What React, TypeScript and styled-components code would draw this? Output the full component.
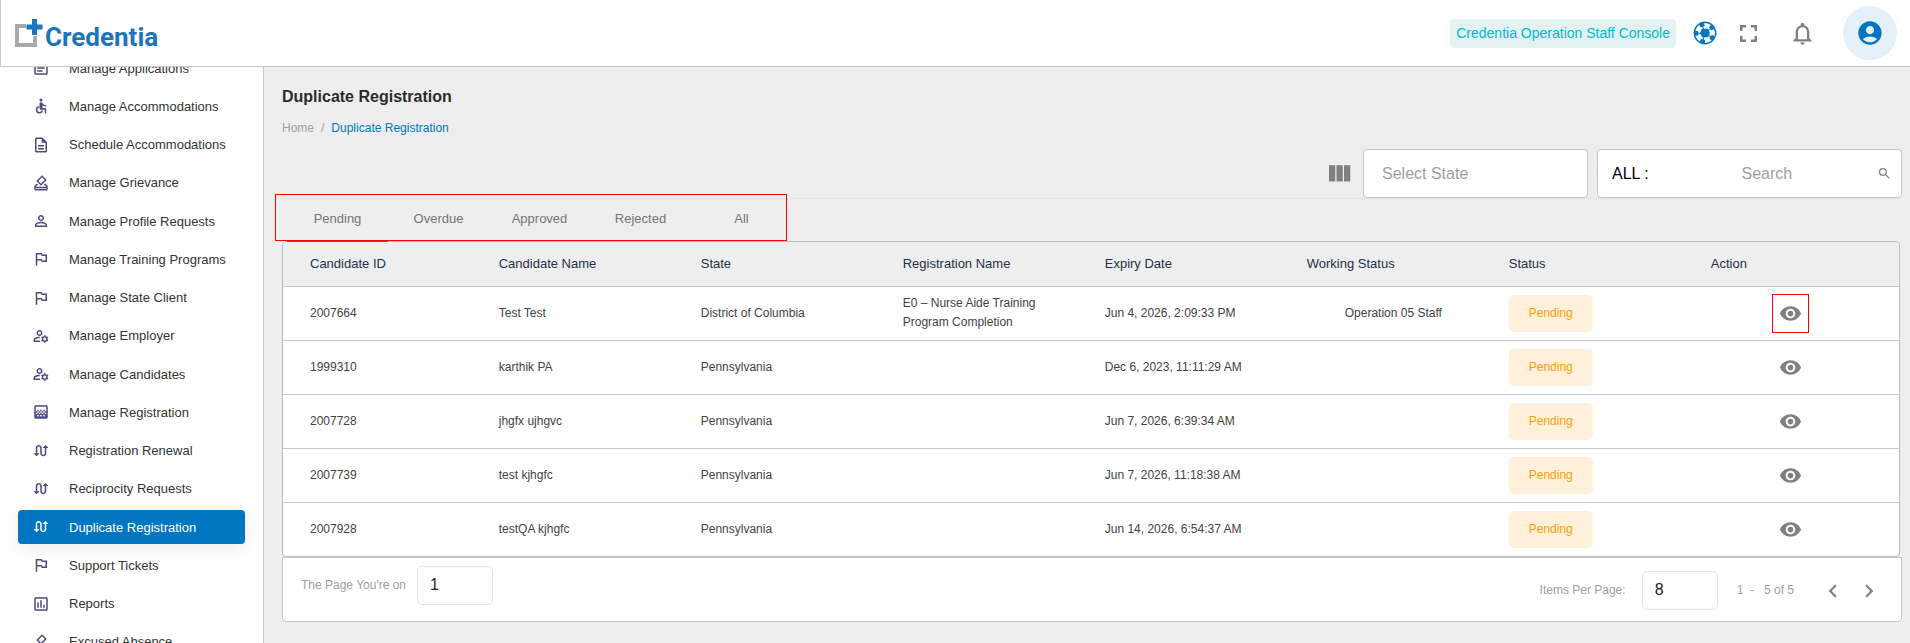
import React from 'react';
import styled, { createGlobalStyle, css } from 'styled-components';
import type { IconType } from 'react-icons';
import {
  MdAccessible,
  MdAccountCircle,
  MdChevronLeft,
  MdChevronRight,
  MdFullscreen,
  MdGradient,
  MdNotificationsNone,
  MdOutlineArticle,
  MdOutlineAssessment,
  MdOutlineDescription,
  MdOutlineHowToVote,
  MdOutlineManageAccounts,
  MdOutlinedFlag,
  MdPersonOutline,
  MdSearch,
  MdSwapCalls,
  MdVisibility,
} from 'react-icons/md';

const colors = {
  brand: '#0076c1',
  page: '#eeeeee',
  line: '#c8c8c8',
  softLine: '#e4e4e4',
  text: '#424242',
  muted: '#9e9e9e',
  icon: '#808080',
  navIcon: '#4b4b80',
  mark: '#ff0000',
};

const GlobalStyle = createGlobalStyle`
  *, *::before, *::after { box-sizing: border-box; }
  html, body, #root { height: 100%; }
  body {
    margin: 0;
    background: ${colors.page};
    color: ${colors.text};
    font-family: "Liberation Sans", Arial, sans-serif;
    font-size: 12px;
    overflow: hidden;
  }
  button, input { font: inherit; color: inherit; }
  button { border: 0; padding: 0; background: none; cursor: pointer; }
  a { color: inherit; text-decoration: none; }
`;

const Shell = styled.div`
  display: flex;
  flex-direction: column;
  height: 100vh;
`;

const TopBar = styled.header`
  display: flex;
  flex: none;
  align-items: center;
  justify-content: space-between;
  height: 67px;
  padding: 0 13px 0 14px;
  background: #fff;
  border-left: 1px solid ${colors.line};
  border-bottom: 1px solid ${colors.line};
`;

const Brand = styled.a`
  display: flex;
`;

const TopActions = styled.div`
  display: flex;
  align-items: center;
`;

const ConsoleTag = styled.span`
  padding: 0 6px;
  margin-right: 15px;
  border-radius: 4px;
  background: #e3f3f2;
  color: #00b8d4;
  font-size: 14px;
  line-height: 29px;
`;

const IconButton = styled.button<{ $width?: number; $color?: string }>`
  display: inline-flex;
  align-items: center;
  justify-content: center;
  width: ${({ $width }) => $width ?? 24}px;
  color: ${({ $color }) => $color ?? colors.icon};
`;

const Avatar = styled.button`
  display: flex;
  align-items: center;
  justify-content: center;
  width: 54px;
  height: 54px;
  margin-left: 16px;
  border-radius: 50%;
  background: #e3f0f9;
  color: ${colors.brand};
`;

const Body = styled.div`
  display: flex;
  flex: 1;
  min-height: 0;
`;

const Sidebar = styled.nav`
  flex: none;
  width: 264px;
  overflow: hidden;
  background: #fff;
  border-right: 1px solid ${colors.line};
`;

const NavList = styled.ul`
  display: flex;
  flex-direction: column;
  justify-content: space-between;
  min-height: 608px;
  margin: -16px 0 0;
  padding: 0 18px;
  list-style: none;
`;

const NavLink = styled.a<{ $active?: boolean }>`
  display: flex;
  align-items: center;
  gap: 19px;
  height: 34px;
  padding-left: 14px;
  border-radius: 4px;
  color: #333;
  font-size: 13px;
  white-space: nowrap;
  svg { color: ${colors.navIcon}; }
  ${({ $active }) =>
    $active &&
    css`
      background: ${colors.brand};
      color: #fff;
      box-shadow: 0 4px 16px rgba(0, 0, 0, 0.08);
      svg { color: #fff; }
    `}
`;

const Main = styled.main`
  flex: 1;
  min-width: 0;
  padding: 20px 8px 20px 18px;
`;

const Title = styled.h1`
  margin: 0;
  color: #2b2b2b;
  font-size: 16px;
  line-height: 20px;
`;

const Crumbs = styled.nav`
  display: flex;
  gap: 7px;
  margin-top: 12px;
  color: ${colors.muted};
  line-height: 18px;
`;

const CrumbCurrent = styled.a`
  color: ${colors.brand};
`;

const Filters = styled.div`
  display: flex;
  align-items: center;
  justify-content: flex-end;
  margin-top: 12px;
  border-bottom: 1px solid ${colors.softLine};
`;

const Field = styled.div<{ $width: number }>`
  display: flex;
  align-items: center;
  width: ${({ $width }) => $width}px;
  height: 49px;
  margin-left: 9px;
  background: #fff;
  border: 1px solid ${colors.line};
  border-radius: 4px;
  font-size: 16px;
`;

const BareInput = styled.input<{ $center?: boolean }>`
  flex: 1;
  min-width: 0;
  width: 100%;
  height: 100%;
  padding: 0 18px;
  border: 0;
  outline: 0;
  background: none;
  text-align: ${({ $center }) => ($center ? 'center' : 'left')};
  &::placeholder { color: ${colors.muted}; opacity: 1; }
`;

const Scope = styled.label`
  padding: 0 18px 0 14px;
  color: #000;
`;

const Tabs = styled.div`
  position: relative;
  display: flex;
  height: 42px;
  padding-left: 5px;
`;

const TabsMark = styled.span`
  position: absolute;
  top: -5px;
  bottom: 0;
  left: -7px;
  width: 512px;
  border: 1px solid ${colors.mark};
  pointer-events: none;
`;

const Tab = styled.button<{ $active?: boolean }>`
  position: relative;
  width: 101px;
  padding-bottom: 3px;
  color: #757575;
  font-size: 13px;
  ${({ $active }) =>
    $active &&
    css`
      &::after {
        content: '';
        position: absolute;
        right: 0;
        bottom: -1px;
        left: 0;
        height: 2px;
        background: ${colors.brand};
      }
    `}
`;

const Card = styled.section`
  margin-right: 2px;
  border: 1px solid #bdbdbd;
  border-radius: 4px;
  background: #fff;
`;

const Table = styled.table`
  width: 100%;
  table-layout: fixed;
  border-collapse: collapse;
  text-align: left;
`;

const HeadCell = styled.th`
  height: 44px;
  padding: 0;
  background: ${colors.page};
  color: #22324a;
  font-size: 13px;
  font-weight: 400;
  &:first-child { padding-left: 27px; border-top-left-radius: 4px; }
  &:last-child { border-top-right-radius: 4px; }
`;

const Row = styled.tr`
  border-top: 1px solid ${colors.line};
`;

const Cell = styled.td<{ $inset?: number }>`
  height: 54px;
  padding: 0 0 0 ${({ $inset }) => $inset ?? 0}px;
  line-height: 19px;
`;

const RegistrationName = styled.div`
  max-width: 160px;
`;

const Status = styled.span`
  display: inline-block;
  width: 84px;
  border-radius: 5px;
  background: #fff0db;
  color: #ffa000;
  line-height: 37px;
  text-align: center;
  vertical-align: middle;
`;

const ViewButton = styled.button<{ $marked?: boolean }>`
  display: flex;
  align-items: center;
  justify-content: center;
  width: 37px;
  height: 39px;
  color: ${colors.icon};
  border: 1px solid ${({ $marked }) => ($marked ? colors.mark : 'transparent')};
`;

const Pager = styled.footer`
  display: flex;
  justify-content: space-between;
  height: 65px;
  padding: 0 14px 0 18px;
  background: #fff;
  border: 1px solid ${colors.line};
  border-radius: 0 0 4px 4px;
  color: ${colors.muted};
`;

const PagerGroup = styled.div<{ $top: number; $gap: number }>`
  display: flex;
  align-items: flex-start;
  padding-top: ${({ $top }) => $top}px;
  line-height: 39px;
  > label { margin-right: ${({ $gap }) => $gap}px; }
  > button { height: 39px; }
`;

const PagerInput = styled.input`
  width: 76px;
  height: 39px;
  padding: 0 12px 2px;
  border: 1px solid ${colors.softLine};
  border-radius: 5px;
  background: #fff;
  color: #222;
  font-size: 16px;
`;

const Range = styled.span`
  margin: 0 21px 0 19px;
  white-space: pre;
`;

const Logo = () => (
  <svg width="160" height="40" viewBox="0 0 160 40" role="img" aria-label="Credentia">
    <path d="M11 13H2v19h18v-9" fill="none" stroke="#a7a9ac" strokeWidth="4" />
    <path d="M17 6h5v5.500h5.500v5H22V22h-5v-5.500h-5.500v-5H17z" fill="#1c75bc" />
    <text x="30" y="33" fill="#1c75bc" fontFamily="Roboto, sans-serif" fontSize="26" fontWeight="700">
      Credentia
    </text>
  </svg>
);

const ColumnsIcon = () => (
  <svg width="30" height="30" viewBox="0 0 24 24" fill="currentColor" aria-hidden="true">
    <path d="M10 18h5V5h-5v13zm-6 0h5V5H4v13zM16 5v13h5V5h-5z" />
  </svg>
);

const BallIcon = () => (
  <svg width="24" height="24" viewBox="0 0 24 24" fill="currentColor" aria-hidden="true">
    <circle cx="12" cy="12" r="10.7" fill="none" stroke="currentColor" strokeWidth="1.400" />
    <path d="M9 7.700h6l2 4.300-2.200 4.300H9.200L7 12z" />
    {[-20, 52, 124, 196, 268].map((angle) => (
      <g key={angle} transform={`rotate(${angle} 12 12)`}>
        <path d="M11.500 4h1v4h-1z" />
        <path d="M9.300 2.600 12 1.200l2.700 1.400-.6 2.700h-4.200z" />
      </g>
    ))}
  </svg>
);

const navItems: { label: string; icon: IconType; active?: boolean }[] = [
  { label: 'Manage Applications', icon: MdOutlineArticle },
  { label: 'Manage Accommodations', icon: MdAccessible },
  { label: 'Schedule Accommodations', icon: MdOutlineDescription },
  { label: 'Manage Grievance', icon: MdOutlineHowToVote },
  { label: 'Manage Profile Requests', icon: MdPersonOutline },
  { label: 'Manage Training Programs', icon: MdOutlinedFlag },
  { label: 'Manage State Client', icon: MdOutlinedFlag },
  { label: 'Manage Employer', icon: MdOutlineManageAccounts },
  { label: 'Manage Candidates', icon: MdOutlineManageAccounts },
  { label: 'Manage Registration', icon: MdGradient },
  { label: 'Registration Renewal', icon: MdSwapCalls },
  { label: 'Reciprocity Requests', icon: MdSwapCalls },
  { label: 'Duplicate Registration', icon: MdSwapCalls, active: true },
  { label: 'Support Tickets', icon: MdOutlinedFlag },
  { label: 'Reports', icon: MdOutlineAssessment },
  { label: 'Excused Absence', icon: MdOutlineHowToVote },
];

const tabs = ['Pending', 'Overdue', 'Approved', 'Rejected', 'All'];

const columns = [
  { label: 'Candidate ID', width: '13.35%' },
  { label: 'Candidate Name', width: '12.5%' },
  { label: 'State', width: '12.5%' },
  { label: 'Registration Name', width: '12.5%' },
  { label: 'Expiry Date', width: '12.5%' },
  { label: 'Working Status', width: '12.5%' },
  { label: 'Status', width: '12.5%' },
  { label: 'Action', width: '11.65%' },
];

const rows = [
  {
    id: '2007664',
    name: 'Test Test',
    state: 'District of Columbia',
    registration: 'E0 – Nurse Aide Training Program Completion',
    expiry: 'Jun 4, 2026, 2:09:33 PM',
    working: 'Operation 05 Staff',
  },
  { id: '1999310', name: 'karthik PA', state: 'Pennsylvania', expiry: 'Dec 6, 2023, 11:11:29 AM' },
  { id: '2007728', name: 'jhgfx ujhgvc', state: 'Pennsylvania', expiry: 'Jun 7, 2026, 6:39:34 AM' },
  { id: '2007739', name: 'test kjhgfc', state: 'Pennsylvania', expiry: 'Jun 7, 2026, 11:18:38 AM' },
  { id: '2007928', name: 'testQA kjhgfc', state: 'Pennsylvania', expiry: 'Jun 14, 2026, 6:54:37 AM' },
];

export default function App() {
  return (
    <Shell>
      <GlobalStyle />
      <TopBar>
        <Brand href="#">
          <Logo />
        </Brand>
        <TopActions>
          <ConsoleTag>Credentia Operation Staff Console</ConsoleTag>
          <IconButton $width={28} $color={colors.brand} aria-label="Support">
            <BallIcon />
          </IconButton>
          <IconButton $width={58} aria-label="Full screen">
            <MdFullscreen size={29} />
          </IconButton>
          <IconButton $width={50} aria-label="Notifications">
            <MdNotificationsNone size={27} />
          </IconButton>
          <Avatar aria-label="Account">
            <MdAccountCircle size={28} />
          </Avatar>
        </TopActions>
      </TopBar>
      <Body>
        <Sidebar>
          <NavList>
            {navItems.map(({ label, icon: Icon, active }) => (
              <li key={label}>
                <NavLink href="#" $active={active}>
                  <Icon size={18} />
                  {label}
                </NavLink>
              </li>
            ))}
          </NavList>
        </Sidebar>
        <Main>
          <Title>Duplicate Registration</Title>
          <Crumbs aria-label="Breadcrumb">
            <a href="#">Home</a>
            <span>/</span>
            <CrumbCurrent href="#">Duplicate Registration</CrumbCurrent>
          </Crumbs>
          <Filters>
            <IconButton $width={30} aria-label="Columns">
              <ColumnsIcon />
            </IconButton>
            <Field $width={225}>
              <BareInput aria-label="Select State" placeholder="Select State" />
            </Field>
            <Field $width={305}>
              <Scope htmlFor="search">ALL :</Scope>
              <BareInput id="search" $center placeholder="Search" />
              <IconButton $width={34} aria-label="Search">
                <MdSearch size={15} />
              </IconButton>
            </Field>
          </Filters>
          <Tabs role="tablist">
            {tabs.map((tab, i) => (
              <Tab key={tab} role="tab" aria-selected={i === 0} $active={i === 0}>
                {tab}
              </Tab>
            ))}
            <TabsMark />
          </Tabs>
          <Card>
            <Table>
              <colgroup>
                {columns.map((c) => (
                  <col key={c.label} style={{ width: c.width }} />
                ))}
              </colgroup>
              <thead>
                <tr>
                  {columns.map((c) => (
                    <HeadCell key={c.label}>{c.label}</HeadCell>
                  ))}
                </tr>
              </thead>
              <tbody>
                {rows.map((r, i) => (
                  <Row key={r.id}>
                    <Cell $inset={27}>{r.id}</Cell>
                    <Cell>{r.name}</Cell>
                    <Cell>{r.state}</Cell>
                    <Cell>
                      <RegistrationName>{r.registration}</RegistrationName>
                    </Cell>
                    <Cell>{r.expiry}</Cell>
                    <Cell $inset={38}>{r.working}</Cell>
                    <Cell>
                      <Status>Pending</Status>
                    </Cell>
                    <Cell $inset={61}>
                      <ViewButton $marked={i === 0} aria-label={`View ${r.id}`}>
                        <MdVisibility size={23} />
                      </ViewButton>
                    </Cell>
                  </Row>
                ))}
              </tbody>
            </Table>
          </Card>
          <Pager>
            <PagerGroup $top={8} $gap={11}>
              <label htmlFor="page">The Page You're on</label>
              <PagerInput id="page" defaultValue="1" />
            </PagerGroup>
            <PagerGroup $top={13} $gap={16}>
              <label htmlFor="size">Items Per Page:</label>
              <PagerInput id="size" defaultValue="8" />
              <Range>{'1  -   5 of 5'}</Range>
              <IconButton $width={36} aria-label="Previous page">
                <MdChevronLeft size={26} />
              </IconButton>
              <IconButton $width={36} aria-label="Next page">
                <MdChevronRight size={26} />
              </IconButton>
            </PagerGroup>
          </Pager>
        </Main>
      </Body>
    </Shell>
  );
}
